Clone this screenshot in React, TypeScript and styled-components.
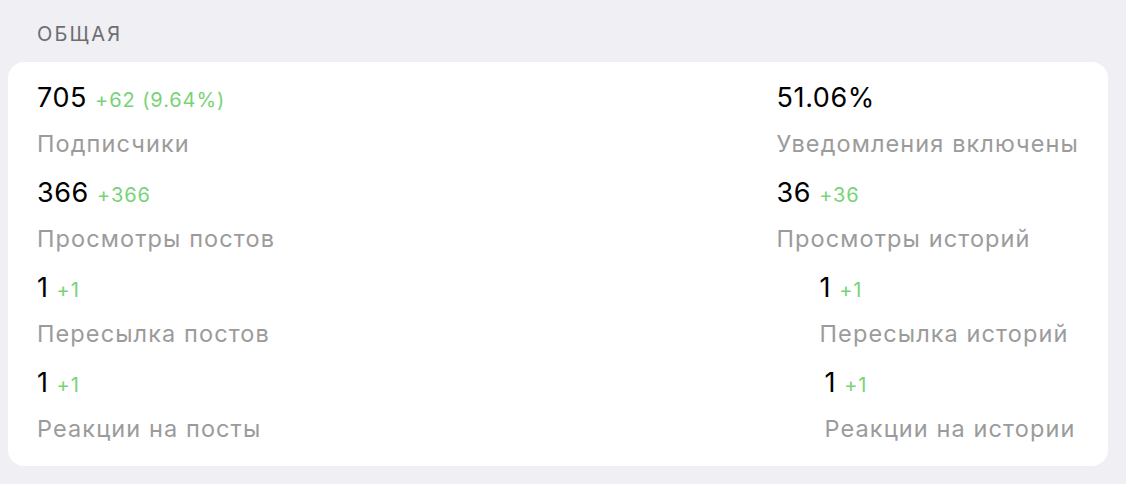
import React from 'react';
import styled, { createGlobalStyle } from 'styled-components';

const GlobalStyle = createGlobalStyle`
  body {
    margin: 0;
    background: #efeff4;
    font-family: Inter, "Noto Sans", sans-serif;
    -webkit-font-smoothing: antialiased;
  }
`;

const Page = styled.div`
  width: 1126px;
  height: 484px;
  box-sizing: border-box;
  padding: 20px 18px 0 8px;
`;

const SectionTitle = styled.div`
  padding-left: 29px;
  font-size: 20px;
  line-height: 28px;
  letter-spacing: 2.2px;
  color: #6d6d72;
  margin-bottom: 14px;
`;

const Card = styled.div`
  background: #fff;
  border-radius: 16px;
  height: 404px;
  box-sizing: border-box;
  padding: 18px 29px 0 29px;
  display: flex;
  justify-content: space-between;
`;

const Column = styled.div`
  display: flex;
  flex-direction: column;
`;

const Stat = styled.div<{ $shift?: number }>`
  margin-left: ${({ $shift }) => $shift ?? 0}px;
  height: 95px;
`;

const ValueRow = styled.div`
  display: flex;
  align-items: baseline;
  gap: 8px;
  height: 36px;
  line-height: 36px;
`;

const Value = styled.span`
  font-size: 27px;
  letter-spacing: 0.6px;
  color: #000;
`;

const Delta = styled.span`
  font-size: 20px;
  letter-spacing: 0.9px;
  color: #78d378;
`;

const Label = styled.div`
  margin-top: 12px;
  font-size: 23.5px;
  line-height: 32px;
  letter-spacing: 1.1px;
  color: #9b9b9b;
`;

type Item = { value: string; delta?: string; label: string; shift?: number };

const left: Item[] = [
  { value: '705', delta: '+62 (9.64%)', label: 'Подписчики' },
  { value: '366', delta: '+366', label: 'Просмотры постов' },
  { value: '1', delta: '+1', label: 'Пересылка постов' },
  { value: '1', delta: '+1', label: 'Реакции на посты' },
];

const right: Item[] = [
  { value: '51.06%', label: 'Уведомления включены' },
  { value: '36', delta: '+36', label: 'Просмотры историй' },
  { value: '1', delta: '+1', label: 'Пересылка историй', shift: 43 },
  { value: '1', delta: '+1', label: 'Реакции на истории', shift: 48 },
];

const StatBlock = ({ item }: { item: Item }) => (
  <Stat $shift={item.shift}>
    <ValueRow>
      <Value>{item.value}</Value>
      {item.delta && <Delta>{item.delta}</Delta>}
    </ValueRow>
    <Label>{item.label}</Label>
  </Stat>
);

export default function App() {
  return (
    <Page>
      <GlobalStyle />
      <SectionTitle>ОБЩАЯ</SectionTitle>
      <Card>
        <Column>
          {left.map((item, i) => (
            <StatBlock key={i} item={item} />
          ))}
        </Column>
        <Column>
          {right.map((item, i) => (
            <StatBlock key={i} item={item} />
          ))}
        </Column>
      </Card>
    </Page>
  );
}
